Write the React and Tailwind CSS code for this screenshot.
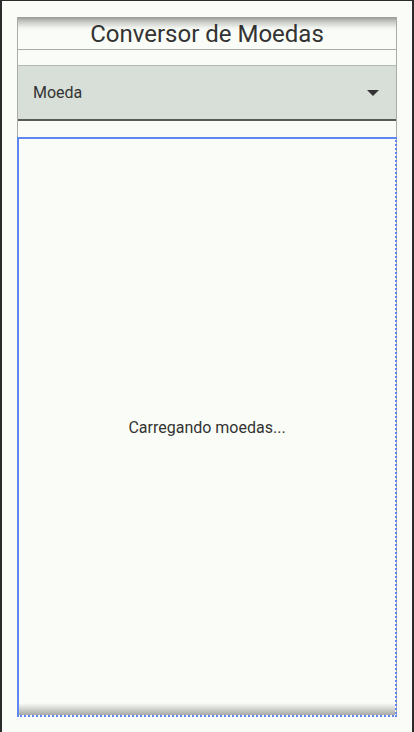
export default function App() {
  return (
    <div
      className="w-[414px] h-[732px] bg-[#fafdf7] border-l-2 border-r-2 border-t border-[#2b2b2b] pt-[16px] px-[15px] box-border overflow-hidden"
      style={{ fontFamily: "Roboto, 'Noto Sans', sans-serif" }}
    >
      <div className="w-[380px] border-x border-[#a9aba6] flex flex-col">
        <div className="h-[33px] border-b border-[#a9aba6] bg-[linear-gradient(to_bottom,#979995_0px,#c9cbc6_5px,#f3f6f0_11px,#fafdf7_14px)] flex items-start justify-center">
          <span className="text-[24px] leading-[32px] text-[#333333] mt-[1px]">Conversor de Moedas</span>
        </div>
        <div className="h-[15px]" />
        <div className="h-[56px] border-t border-[#b5b8b3] border-b-2 border-b-[#585a57] bg-[#d8dfd8] flex items-center justify-between pl-[15px] pr-[17px]">
          <span className="text-[16px] text-[#333333]">Moeda</span>
          <svg width="12" height="6" viewBox="0 0 12 6" className="mt-[1px]">
            <path d="M0 0 L12 0 L6 6 Z" fill="#333333" />
          </svg>
        </div>
        <div className="h-[16px]" />
        <div className="-mx-px h-[580px] border-2 border-dotted border-[#5f86f1] [border-left-style:solid] [border-top-style:solid] flex flex-col">
          <div className="flex-1 flex items-center justify-center">
            <span className="text-[16px] text-[#333333] mt-[14px]">Carregando moedas...</span>
          </div>
          <div className="h-[12px] bg-[linear-gradient(to_bottom,#fafdf7,#dfe1dc_35%,#a6a8a3)]" />
        </div>
      </div>
    </div>
  );
}
